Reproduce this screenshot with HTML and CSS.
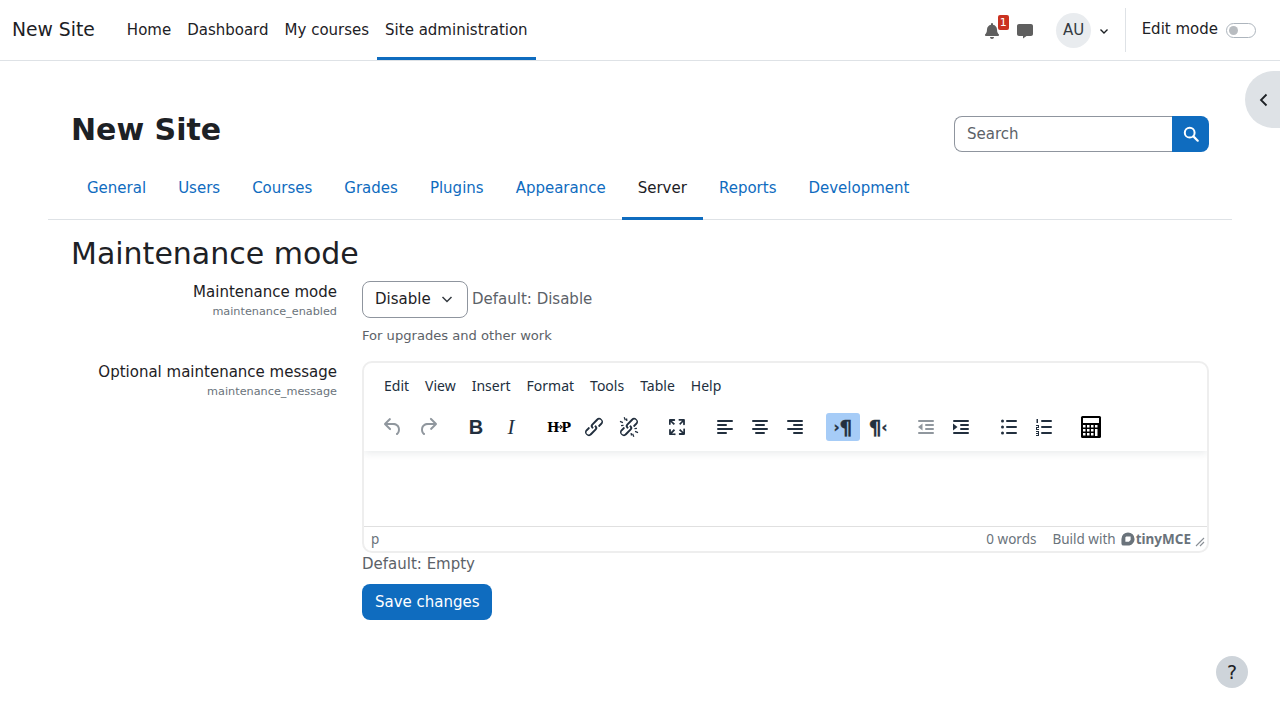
FILE: index.html
```html
<!DOCTYPE html>
<html lang="en">
  <head>
    <meta charset="UTF-8" />
    <meta name="viewport" content="width=device-width, initial-scale=1.0" />
    <title>Maintenance mode</title>
    <link rel="stylesheet" href="styles.css">
  </head>
  <body>
    <svg class="icon-defs" aria-hidden="true">
      <symbol id="i-undo" viewBox="0 0 24 24"><path d="M6.4 8H12c3.7 0 6.2 2 6.8 5.1.6 2.7-.4 5.6-2.3 6.8a1 1 0 0 1-1-1.8c1.1-.6 1.8-2.7 1.4-4.6-.5-2.1-2.1-3.5-4.9-3.5H6.4l3.3 3.3a1 1 0 1 1-1.4 1.4l-5-5a1 1 0 0 1 0-1.4l5-5a1 1 0 0 1 1.4 1.4L6.4 8Z"/></symbol>
      <symbol id="i-redo" viewBox="0 0 24 24"><path d="M17.6 10H12c-2.8 0-4.4 1.4-4.9 3.5-.4 2 .3 4 1.4 4.6a1 1 0 1 1-1 1.8c-2-1.2-2.9-4.1-2.3-6.8.6-3 3-5.1 6.8-5.1h5.6l-3.3-3.3a1 1 0 1 1 1.4-1.4l5 5a1 1 0 0 1 0 1.4l-5 5a1 1 0 0 1-1.4-1.4l3.3-3.3Z"/></symbol>
      <symbol id="i-link" viewBox="0 0 24 24"><path d="M6.2 12.3a1 1 0 0 1 1.4 1.4l-2 2a2 2 0 1 0 2.6 2.8l4.8-4.8a1 1 0 0 0 0-1.4 1 1 0 1 1 1.4-1.3 2.9 2.9 0 0 1 0 4L9.6 20a3.9 3.9 0 0 1-5.5-5.5l2-2Zm11.6-.6a1 1 0 0 1-1.4-1.4l2-2a2 2 0 1 0-2.6-2.8L11 10.3a1 1 0 0 0 0 1.4A1 1 0 1 1 9.6 13a2.9 2.9 0 0 1 0-4L14.4 4a3.9 3.9 0 0 1 5.5 5.5l-2 2Z"/></symbol>
      <symbol id="i-unlink" viewBox="0 0 24 24"><path d="M6.2 12.3a1 1 0 0 1 1.4 1.4l-2 2a2 2 0 1 0 2.6 2.8l4.8-4.8a1 1 0 0 0 0-1.4 1 1 0 1 1 1.4-1.3 2.9 2.9 0 0 1 0 4L9.6 20a3.9 3.9 0 0 1-5.5-5.5l2-2Zm11.6-.6a1 1 0 0 1-1.4-1.4l2-2a2 2 0 1 0-2.6-2.8L11 10.3a1 1 0 0 0 0 1.4A1 1 0 1 1 9.6 13a2.9 2.9 0 0 1 0-4L14.4 4a3.9 3.9 0 0 1 5.5 5.5l-2 2Z"/><path d="M3.2 5.8 6.2 7l-.5 1.2-3-1.2ZM7.8 2 9 5l-1.2.5-1.2-3ZM4 10l2.5-.3.1 1.3-2.5.3ZM10.2 3.5l.3 2.5-1.3.1-.3-2.5ZM20.8 18.2l-3-1.2.5-1.2 3 1.2ZM16.2 22 15 19l1.2-.5 1.2 3ZM20 14l-2.5.3-.1-1.3 2.500-.3ZM13.800 20.500l-.3-2.500 1.300-.1.3 2.500Z"/></symbol>
      <symbol id="i-full" viewBox="0 0 24 24"><path d="m15.3 10-1.2-1.3 2.9-3h-2.3a.9.9 0 1 1 0-1.7H19c.5 0 .9.4.9.9v4.4a.9.9 0 1 1-1.8 0V7l-2.9 3Zm0 4 3 3v-2.3a.9.9 0 1 1 1.7 0V19c0 .5-.4.9-.9.9h-4.4a.9.9 0 1 1 0-1.8H17l-3-2.9 1.3-1.2ZM10 15.4l-2.9 3h2.3a.9.9 0 1 1 0 1.7H5a.9.9 0 0 1-.9-.9v-4.4a.9.9 0 1 1 1.8 0V17l2.9-3 1.2 1.3ZM8.7 10 5.7 7v2.3a.9.9 0 0 1-1.7 0V5c0-.5.4-.9.9-.9h4.4a.9.9 0 0 1 0 1.8H7l3 2.9-1.3 1.2Z"/></symbol>
      <symbol id="i-left" viewBox="0 0 24 24"><rect x="4" y="5" width="16" height="2" rx="1"/><rect x="4" y="9" width="10" height="2" rx="1"/><rect x="4" y="13" width="16" height="2" rx="1"/><rect x="4" y="17" width="10" height="2" rx="1"/></symbol>
      <symbol id="i-center" viewBox="0 0 24 24"><rect x="4" y="5" width="16" height="2" rx="1"/><rect x="7" y="9" width="10" height="2" rx="1"/><rect x="4" y="13" width="16" height="2" rx="1"/><rect x="7" y="17" width="10" height="2" rx="1"/></symbol>
      <symbol id="i-right" viewBox="0 0 24 24"><rect x="4" y="5" width="16" height="2" rx="1"/><rect x="10" y="9" width="10" height="2" rx="1"/><rect x="4" y="13" width="16" height="2" rx="1"/><rect x="10" y="17" width="10" height="2" rx="1"/></symbol>
      <symbol id="i-outdent" viewBox="0 0 24 24"><rect x="4" y="5" width="16" height="2" rx="1"/><rect x="11" y="9" width="9" height="2" rx="1"/><rect x="11" y="13" width="9" height="2" rx="1"/><rect x="4" y="17" width="16" height="2" rx="1"/><path d="M8.5 8.5v7L4 12Z"/></symbol>
      <symbol id="i-indent" viewBox="0 0 24 24"><rect x="4" y="5" width="16" height="2" rx="1"/><rect x="11" y="9" width="9" height="2" rx="1"/><rect x="11" y="13" width="9" height="2" rx="1"/><rect x="4" y="17" width="16" height="2" rx="1"/><path d="M4 8.5v7L8.5 12Z"/></symbol>
      <symbol id="i-bullets" viewBox="0 0 24 24"><circle cx="5.5" cy="6" r="1.5"/><circle cx="5.5" cy="12" r="1.5"/><circle cx="5.5" cy="18" r="1.5"/><rect x="9" y="5" width="11" height="2" rx="1"/><rect x="9" y="11" width="11" height="2" rx="1"/><rect x="9" y="17" width="11" height="2" rx="1"/></symbol>
      <symbol id="i-numbers" viewBox="0 0 24 24"><rect x="4.5" y="4" width="1.5" height="4"/><rect x="4" y="10" width="3" height="1"/><rect x="4" y="12" width="3" height="1"/><rect x="6" y="10" width="1" height="2"/><rect x="4" y="12" width="1" height="2"/><rect x="4" y="14" width="3" height="1"/><rect x="4" y="16" width="3" height="1"/><rect x="4" y="18" width="3" height="1"/><rect x="4" y="20" width="3" height="1"/><rect x="6" y="16" width="1" height="5"/><rect x="9" y="5" width="11" height="2" rx="1"/><rect x="9" y="11" width="11" height="2" rx="1"/><rect x="9" y="17" width="11" height="2" rx="1"/></symbol>
    </svg>

    <header class="navbar">
      <a class="brand">New Site</a>
      <nav class="primary-nav">
        <a class="nav-item">Home</a>
        <a class="nav-item">Dashboard</a>
        <a class="nav-item">My courses</a>
        <a class="nav-item active">Site administration</a>
      </nav>
      <div class="usernav">
        <span class="popover-icon">
          <svg class="nav-icon" viewBox="0 0 448 512"><path fill="#5f5f5f" d="M224 512c35 0 64-29 64-64H160c0 35 29 64 64 64zm216-150c-19-21-56-52-56-154 0-78-54-140-128-155V32a32 32 0 0 0-64 0v21C118 68 64 130 64 208c0 102-37 133-56 154-6 6-8 13-8 22 0 16 13 32 32 32h384c19 0 32-16 32-32 0-9-2-16-8-22z"/></svg>
          <span class="count-badge">1</span>
        </span>
        <span class="popover-icon msg-icon">
          <svg class="nav-icon" viewBox="0 0 512 512"><path fill="#5f5f5f" d="M64 32h384c35 0 64 29 64 64v256c0 35-29 64-64 64H304l-112 80v-80H64c-35 0-64-29-64-64V96c0-35 29-64 64-64z"/></svg>
        </span>
        <span class="avatar">AU</span>
        <svg class="caret-icon" viewBox="0 0 12 12"><path d="M2.5 4.500 6 8l3.500-3.500" fill="none" stroke="#1d2125" stroke-width="1.4"/></svg>
        <span class="nav-divider"></span>
        <span class="edit-label">Edit mode</span>
        <span class="switch"><span class="switch-knob"></span></span>
      </div>
    </header>

    <button class="drawer-toggle">
      <svg viewBox="0 0 16 16" width="16" height="16"><path d="M10.5 2.500 5 8l5.500 5.500" fill="none" stroke="#1d2125" stroke-width="1.8"/></svg>
    </button>

    <div class="page">
      <div class="page-head">
        <h1>New Site</h1>
        <form class="search">
          <input class="search-input" type="text" placeholder="Search" />
          <button class="search-btn" type="button">
            <svg viewBox="0 0 16 16" width="16" height="16"><circle cx="6.7" cy="6.7" r="4.9" fill="none" stroke="#fff" stroke-width="2"/><path d="m10.4 10.4 4.3 4.3" stroke="#fff" stroke-width="2.2" stroke-linecap="round"/></svg>
          </button>
        </form>
      </div>

      <ul class="tabs">
        <li class="tab">General</li>
        <li class="tab">Users</li>
        <li class="tab">Courses</li>
        <li class="tab">Grades</li>
        <li class="tab">Plugins</li>
        <li class="tab">Appearance</li>
        <li class="tab active">Server</li>
        <li class="tab">Reports</li>
        <li class="tab">Development</li>
      </ul>

      <div class="content">
        <h2>Maintenance mode</h2>

        <div class="setting setting-first">
          <div class="setting-label">
            <label>Maintenance mode</label>
            <small>maintenance_enabled</small>
          </div>
          <div class="setting-control">
            <div class="select-row">
              <span class="select">Disable
                <svg viewBox="0 0 16 16" width="16" height="16"><path d="M3.5 6 8 10.500 12.500 6" fill="none" stroke="#343a40" stroke-width="1.5"/></svg>
              </span>
              <span class="default-text select-default">Default: Disable</span>
            </div>
            <p class="setting-desc">For upgrades and other work</p>
          </div>
        </div>

        <div class="setting">
          <div class="setting-label">
            <label>Optional maintenance message</label>
            <small>maintenance_message</small>
          </div>
          <div class="setting-control">
            <div class="editor">
              <div class="editor-header">
                <div class="menubar">
                  <span>Edit</span><span>View</span><span>Insert</span><span>Format</span><span>Tools</span><span>Table</span><span>Help</span>
                </div>
                <div class="toolbar">
                  <div class="tb-group">
                    <span class="tb-btn disabled"><svg><use href="#i-undo"/></svg></span>
                    <span class="tb-btn disabled"><svg><use href="#i-redo"/></svg></span>
                  </div>
                  <div class="tb-group">
                    <span class="tb-btn tb-bold">B</span>
                    <span class="tb-btn tb-italic">I</span>
                  </div>
                  <div class="tb-group">
                    <span class="tb-btn tb-h5p"><span>H</span><svg class="h5p-arrow" viewBox="0 0 8 6"><path d="M0 3h6M4 1l2.500 2L4 5" fill="none" stroke="#000" stroke-width="1"/></svg><span>P</span></span>
                    <span class="tb-btn"><svg><use href="#i-link"/></svg></span>
                    <span class="tb-btn"><svg><use href="#i-unlink"/></svg></span>
                  </div>
                  <div class="tb-group">
                    <span class="tb-btn"><svg><use href="#i-full"/></svg></span>
                  </div>
                  <div class="tb-group">
                    <span class="tb-btn"><svg><use href="#i-left"/></svg></span>
                    <span class="tb-btn"><svg><use href="#i-center"/></svg></span>
                    <span class="tb-btn"><svg><use href="#i-right"/></svg></span>
                  </div>
                  <div class="tb-group">
                    <span class="tb-btn tb-para on"><small>›</small>¶</span>
                    <span class="tb-btn tb-para">¶<small>‹</small></span>
                  </div>
                  <div class="tb-group">
                    <span class="tb-btn disabled"><svg><use href="#i-outdent"/></svg></span>
                    <span class="tb-btn"><svg><use href="#i-indent"/></svg></span>
                  </div>
                  <div class="tb-group">
                    <span class="tb-btn"><svg><use href="#i-bullets"/></svg></span>
                    <span class="tb-btn"><svg><use href="#i-numbers"/></svg></span>
                  </div>
                  <div class="tb-group">
                    <span class="tb-btn">
                      <svg class="calc" viewBox="0 0 22 24">
                        <rect x="1" y="1" width="20" height="22" rx="1.5" fill="#000"/>
                        <rect x="3" y="3" width="16" height="5" fill="#fff"/>
                        <g fill="#fff">
                          <rect x="3" y="10" width="2.5" height="2.5"/><rect x="7" y="10" width="2.5" height="2.5"/><rect x="11" y="10" width="2.5" height="2.5"/><rect x="15" y="10" width="2.5" height="2.5"/>
                          <rect x="3" y="14" width="2.5" height="2.5"/><rect x="7" y="14" width="2.5" height="2.5"/><rect x="11" y="14" width="2.5" height="2.5"/><rect x="15" y="14" width="2.5" height="7"/>
                          <rect x="3" y="18" width="2.5" height="2.5"/><rect x="7" y="18" width="2.5" height="2.5"/><rect x="11" y="18" width="2.5" height="2.5"/>
                        </g>
                      </svg>
                    </span>
                  </div>
                </div>
              </div>
              <div class="editor-body"></div>
              <div class="statusbar">
                <span class="path">p</span>
                <span class="wordcount">0 words</span>
                <span class="branding">Build with
                  <svg viewBox="0 0 16 16" width="14" height="14"><path fill-rule="evenodd" fill="#6a737b" d="M8 .5A7.500 7.500 0 0 1 15.500 8c0 4-3 7.500-7.500 7.500H3A2.500 2.500 0 0 1 .5 13V8A7.500 7.500 0 0 1 8 .5ZM5 6v5h4l2-2V5H6Z"/></svg>
                  <b>tinyMCE</b>
                </span>
                <svg class="resize" viewBox="0 0 10 10" width="10" height="10"><path d="M1 9 9 1M5 9l4-4" stroke="#8a9096" stroke-width="1.1"/></svg>
              </div>
            </div>
            <div class="default-text">Default: Empty</div>
          </div>
        </div>

        <div class="setting-actions">
          <button class="save-btn" type="button">Save changes</button>
        </div>
      </div>
    </div>

    <button class="help-btn">?</button>
  </body>
</html>
```

FILE: styles.css
```css
body {
  margin: 0;
  font-family: "DejaVu Sans", sans-serif;
  font-size: 15px;
  line-height: 22px;
  color: #1d2125;
  background: #fff;
}
.icon-defs {
  width: 0;
  height: 0;
  display: block;
}

/* top bar */
.navbar {
  display: flex;
  align-items: stretch;
  height: 60px;
  border-bottom: 1px solid #dee2e6;
  padding: 0 12px;
}
.brand {
  font-size: 18.75px;
  line-height: 60px;
  margin-right: 24px;
}
.primary-nav {
  display: flex;
}
.nav-item {
  padding: 0 8px;
  line-height: 60px;
  border-bottom: 3px solid transparent;
  height: 57px;
}
.nav-item.active {
  border-bottom-color: #0f6cbf;
}
.usernav {
  margin-left: auto;
  display: flex;
  align-items: center;
}
.popover-icon {
  position: relative;
  display: flex;
  width: 16px;
  height: 16px;
  margin-top: 1px;
}
.nav-icon {
  width: 16px;
  height: 16px;
}
.msg-icon {
  margin-left: 17px;
  margin-right: 23px;
}
.count-badge {
  position: absolute;
  top: -8px;
  left: 14px;
  width: 11px;
  height: 15px;
  background: #ca3120;
  color: #fff;
  border-radius: 2px;
  font-size: 11px;
  line-height: 15px;
  text-align: center;
}
.avatar {
  width: 35px;
  height: 35px;
  border-radius: 50%;
  background: #e9ecef;
  text-align: center;
  text-indent: 1px;
  line-height: 35px;
  font-size: 15px;
  color: #343a40;
}
.caret-icon {
  width: 12px;
  height: 12px;
  margin-left: 7px;
  margin-top: 2px;
}
.nav-divider {
  width: 1px;
  height: 44px;
  background: #dee2e6;
  margin: 0 16px 0 15px;
}
.edit-label {
  margin-right: 8px;
  margin-top: -2px;
}
.switch {
  display: block;
  width: 30px;
  height: 15px;
  box-sizing: border-box;
  border: 1px solid #adb5bd;
  border-radius: 8px;
  margin-right: 12px;
  padding: 2px 0 0 2px;
}
.switch-knob {
  display: block;
  width: 9px;
  height: 9px;
  border-radius: 50%;
  background: #b8bcc0;
}
.drawer-toggle {
  position: absolute;
  top: 71px;
  left: 1245px;
  width: 35px;
  height: 57px;
  border: 0;
  padding: 0 0 0 11px;
  background: #dee2e6;
  border-radius: 29px 0 0 29px;
  display: flex;
  align-items: center;
}

/* page */
.page {
  margin: 0 48px;
}
.page-head {
  display: flex;
  justify-content: space-between;
  align-items: center;
  padding: 55px 23px 0;
  height: 36px;
}
h1 {
  margin: 0;
  font-size: 30px;
  font-weight: 700;
  line-height: 36px;
  position: relative;
  top: -4px;
}
.search {
  display: flex;
  width: 255px;
  height: 36px;
}
.search-input {
  flex: 1;
  min-width: 0;
  box-sizing: border-box;
  font: inherit;
  color: #495057;
  padding: 0 12px;
  border: 1px solid #8f959e;
  border-right: 0;
  border-radius: 8px 0 0 8px;
}
.search-input::placeholder {
  color: #5c6268;
  opacity: 1;
}
.search-btn {
  width: 37px;
  border: 0;
  padding: 0;
  background: #0f6cbf;
  border-radius: 0 8px 8px 0;
  display: flex;
  align-items: center;
  justify-content: center;
}
.tabs {
  list-style: none;
  display: flex;
  margin: 16px 0 0;
  padding: 0 23px;
  height: 51px;
  border-bottom: 1px solid #dee2e6;
}
.tab {
  padding: 0 16px;
  height: 49px;
  line-height: 40px;
  color: #0f6cbf;
  border-bottom: 3px solid transparent;
}
.tab.active {
  color: #1d2125;
  border-bottom-color: #0f6cbf;
}
.content {
  padding: 0 23px;
}
h2 {
  margin: 16px 0 8px;
  font-size: 30px;
  font-weight: 400;
  line-height: 36px;
}

/* settings form */
.setting {
  display: flex;
  gap: 25px;
  margin-top: 5px;
}
.setting-first {
  margin-top: 0;
}
.setting-label {
  width: 266px;
  padding-top: 1px;
  text-align: right;
  flex: none;
}
.setting-label label {
  display: block;
  line-height: 22px;
}
.setting-label small {
  display: block;
  font-size: 11.25px;
  line-height: 18px;
  color: #6a737b;
}
.setting-control {
  flex: 1;
  min-width: 0;
}
.select-row {
  display: flex;
  align-items: center;
  gap: 4px;
  margin-top: 1px;
}
.select {
  display: flex;
  align-items: center;
  justify-content: space-between;
  box-sizing: border-box;
  width: 106px;
  height: 37px;
  padding: 0 12px 2px;
  border: 1px solid #8f959e;
  border-radius: 8px;
  color: #1d2125;
}
.default-text {
  color: #5c6268;
}
.select-default {
  padding-bottom: 2px;
}
.setting-desc {
  margin: 8px 0 9px;
  font-size: 13.1px;
  line-height: 20px;
  color: #5c6268;
}

/* editor */
.editor {
  box-sizing: border-box;
  height: 192px;
  border: 2px solid #eeeeee;
  border-radius: 10px;
  margin-top: 1px;
  display: flex;
  flex-direction: column;
  font-family: "Noto Sans", sans-serif;
  overflow: hidden;
}
.editor-header {
  height: 88px;
  flex: none;
  box-shadow: 0 2px 8px rgba(34, 47, 62, 0.1);
  position: relative;
}
.menubar {
  display: flex;
  padding: 11px 0 0 20px;
  gap: 16px;
  height: 28px;
  font-size: 14px;
  line-height: 24px;
  color: #222f3e;
}
.toolbar {
  display: flex;
  padding: 11px 0 0 12px;
  gap: 14px;
}
.tb-group {
  display: flex;
  gap: 1px;
}
.tb-btn {
  width: 34px;
  height: 28px;
  border-radius: 3px;
  display: flex;
  align-items: center;
  justify-content: center;
  color: #222f3e;
  fill: #222f3e;
}
.tb-btn svg {
  width: 24px;
  height: 24px;
}
.tb-btn svg.calc {
  width: 22px;
  height: 24px;
  margin-left: -3px;
}
.tb-btn svg.h5p-arrow {
  width: 8px;
  height: 6px;
  margin: 0 -3px;
  flex: none;
}
.tb-btn.disabled {
  color: #222f3e80;
  fill: #222f3e80;
}
.tb-btn.on {
  background: #a6ccf7;
}
.tb-bold {
  font: 700 20px "Liberation Sans", sans-serif;
}
.tb-italic {
  font: italic 21px "Liberation Serif", serif;
}
.tb-h5p {
  font: 700 13px "DejaVu Serif", serif;
  color: #000;
}
.tb-para {
  font: 700 20px "DejaVu Sans", sans-serif;
  -webkit-text-stroke: 0.4px #222f3e;
}
.tb-para small {
  font-size: 14px;
}
.editor-body {
  flex: 1;
}
.statusbar {
  display: flex;
  align-items: center;
  height: 24px;
  flex: none;
  border-top: 1px solid #e0e0e0;
  padding: 0 2px 0 7px;
  font-size: 13.5px;
  color: #6a737b;
}
.wordcount {
  margin-left: auto;
  margin-right: 16px;
}
.branding {
  display: flex;
  align-items: center;
  gap: 5px;
  margin-right: 4px;
}
.branding b {
  font-weight: 700;
  margin-left: -4px;
}
.resize {
  margin-top: 6px;
}
.setting-actions {
  padding: 9px 0 0 291px;
}
.save-btn {
  height: 36px;
  padding: 0 12px 0 13px;
  border: 0;
  border-radius: 8px;
  background: #0f6cbf;
  color: #fff;
  font: inherit;
}
.help-btn {
  position: fixed;
  left: 1216px;
  top: 656px;
  width: 32px;
  height: 32px;
  padding: 0;
  border: 0;
  border-radius: 50%;
  background: #ced4da;
  color: #1d2125;
  font: 400 19px "DejaVu Sans", sans-serif;
}
```
